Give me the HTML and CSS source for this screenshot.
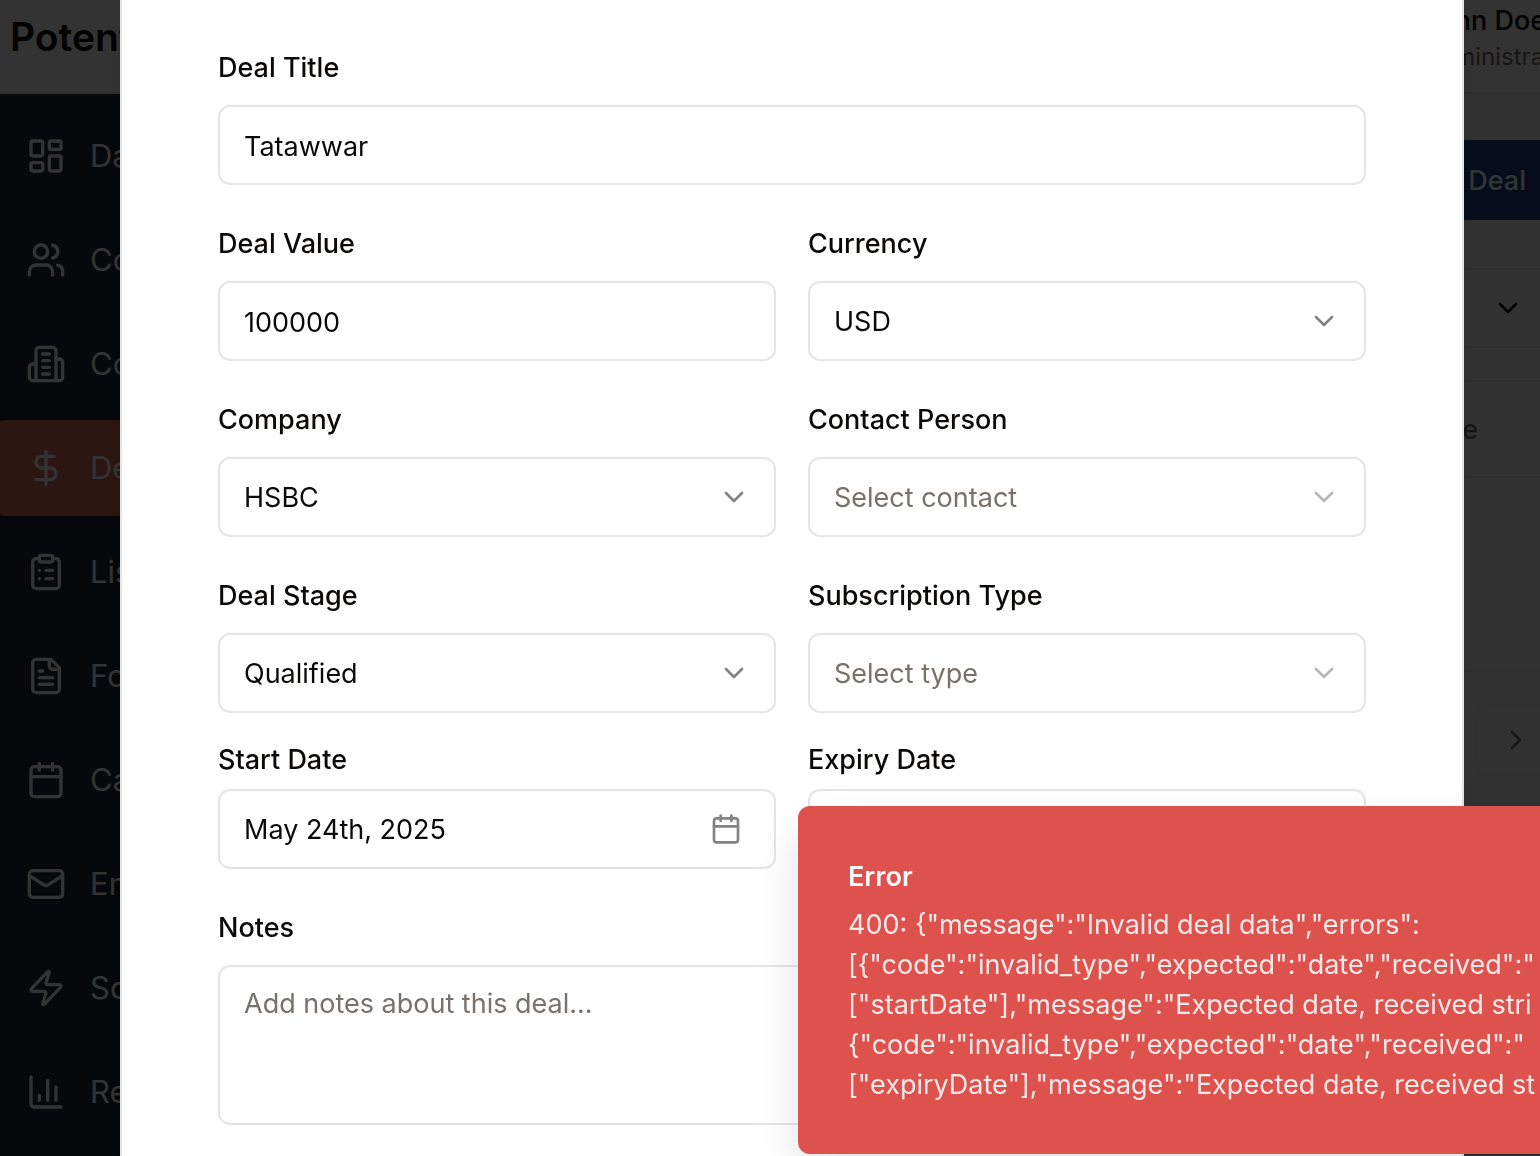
FILE: index.html
```html
<!DOCTYPE html>
<html lang="en">
<head>
<meta charset="utf-8">
<meta name="viewport" content="width=device-width, initial-scale=1">
<title>Deals</title>
<link rel="stylesheet" href="styles.css">
</head>
<body>
<div class="app">
  <header class="topbar">
    <span class="brand">Potential</span>
    <div class="user">
      <span class="user-name">John Doe</span>
      <span class="user-role">Administrator</span>
    </div>
  </header>
  <div class="body">
    <nav class="sidebar">
      <a class="nav-item" href="#"><svg class="icon-lg" viewBox="0 0 24 24"><rect x="3" y="3" width="7" height="9" rx="1"/><rect x="14" y="3" width="7" height="5" rx="1"/><rect x="14" y="12" width="7" height="9" rx="1"/><rect x="3" y="16" width="7" height="5" rx="1"/></svg>Dashboard</a>
      <a class="nav-item" href="#"><svg class="icon-lg" viewBox="0 0 24 24"><path d="M16 21v-2a4 4 0 0 0-4-4H6a4 4 0 0 0-4 4v2"/><circle cx="9" cy="7" r="4"/><path d="M22 21v-2a4 4 0 0 0-3-3.87"/><path d="M16 3.13a4 4 0 0 1 0 7.75"/></svg>Contacts</a>
      <a class="nav-item" href="#"><svg class="icon-lg" viewBox="0 0 24 24"><path d="M6 22V4a2 2 0 0 1 2-2h8a2 2 0 0 1 2 2v18Z"/><path d="M6 12H4a2 2 0 0 0-2 2v6a2 2 0 0 0 2 2h2"/><path d="M18 9h2a2 2 0 0 1 2 2v9a2 2 0 0 1-2 2h-2"/><path d="M10 6h4M10 10h4M10 14h4M10 18h4"/></svg>Companies</a>
      <a class="nav-item nav-item-active" href="#"><svg class="icon-lg" viewBox="0 0 24 24"><path d="M12 2v20"/><path d="M17 5H9.5a3.5 3.5 0 0 0 0 7h5a3.5 3.5 0 0 1 0 7H6"/></svg>Deals</a>
      <a class="nav-item" href="#"><svg class="icon-lg" viewBox="0 0 24 24"><rect x="8" y="2" width="8" height="4" rx="1"/><path d="M16 4h2a2 2 0 0 1 2 2v14a2 2 0 0 1-2 2H6a2 2 0 0 1-2-2V6a2 2 0 0 1 2-2h2"/><path d="M12 11h4M12 16h4M8 11h.01M8 16h.01"/></svg>Lists</a>
      <a class="nav-item" href="#"><svg class="icon-lg" viewBox="0 0 24 24"><path d="M15 2H6a2 2 0 0 0-2 2v16a2 2 0 0 0 2 2h12a2 2 0 0 0 2-2V7Z"/><path d="M14 2v4a2 2 0 0 0 2 2h4"/><path d="M10 9H8M16 13H8M16 17H8"/></svg>Forms</a>
      <a class="nav-item" href="#"><svg class="icon-lg" viewBox="0 0 24 24"><path d="M8 2v4M16 2v4"/><rect x="3" y="4" width="18" height="18" rx="2"/><path d="M3 10h18"/></svg>Calendar</a>
      <a class="nav-item" href="#"><svg class="icon-lg" viewBox="0 0 24 24"><rect x="2" y="4" width="20" height="16" rx="2"/><path d="m22 7-8.97 5.7a1.94 1.94 0 0 1-2.06 0L2 7"/></svg>Email</a>
      <a class="nav-item" href="#"><svg class="icon-lg" viewBox="0 0 24 24"><path d="M4 14a1 1 0 0 1-.78-1.63l9.9-10.2a.5.5 0 0 1 .86.46l-1.92 6.02A1 1 0 0 0 13 10h7a1 1 0 0 1 .78 1.63l-9.9 10.2a.5.5 0 0 1-.86-.46l1.92-6.02A1 1 0 0 0 11 14z"/></svg>Social</a>
      <a class="nav-item" href="#"><svg class="icon-lg" viewBox="0 0 24 24"><path d="M3 3v16a2 2 0 0 0 2 2h16"/><path d="M18 17V9M13 17V5M8 17v-3"/></svg>Reports</a>
    </nav>
    <main class="main">
      <button class="add-button" type="button">Add Deal</button>
      <button class="filter" type="button" aria-label="Filter by stage"><svg class="icon" viewBox="0 0 24 24"><path d="m6 9 6 6 6-6"/></svg></button>
      <table class="deals">
        <thead><tr><th>Expiry Date</th></tr></thead>
        <tbody><tr><td></td></tr></tbody>
      </table>
      <button class="next" type="button" aria-label="Next page"><svg class="icon" viewBox="0 0 24 24"><path d="m9 18 6-6-6-6"/></svg></button>
    </main>
  </div>
</div>

<div class="overlay"></div>

<div class="dialog" role="dialog" aria-label="Edit deal">
  <form class="form">
    <div class="field field-wide">
      <label for="title">Deal Title</label>
      <input class="control" id="title" type="text" value="Tatawwar">
    </div>
    <div class="field">
      <label for="value">Deal Value</label>
      <input class="control" id="value" type="text" inputmode="numeric" value="100000">
    </div>
    <div class="field">
      <label for="currency">Currency</label>
      <div class="select">
        <select class="control" id="currency"><option>USD</option></select>
        <svg class="icon" viewBox="0 0 24 24"><path d="m6 9 6 6 6-6"/></svg>
      </div>
    </div>
    <div class="field">
      <label for="company">Company</label>
      <div class="select">
        <select class="control" id="company"><option>HSBC</option></select>
        <svg class="icon" viewBox="0 0 24 24"><path d="m6 9 6 6 6-6"/></svg>
      </div>
    </div>
    <div class="field">
      <label for="contact">Contact Person</label>
      <div class="select select-empty">
        <select class="control" id="contact"><option>Select contact</option></select>
        <svg class="icon" viewBox="0 0 24 24"><path d="m6 9 6 6 6-6"/></svg>
      </div>
    </div>
    <div class="field">
      <label for="stage">Deal Stage</label>
      <div class="select">
        <select class="control" id="stage"><option>Qualified</option></select>
        <svg class="icon" viewBox="0 0 24 24"><path d="m6 9 6 6 6-6"/></svg>
      </div>
    </div>
    <div class="field">
      <label for="type">Subscription Type</label>
      <div class="select select-empty">
        <select class="control" id="type"><option>Select type</option></select>
        <svg class="icon" viewBox="0 0 24 24"><path d="m6 9 6 6 6-6"/></svg>
      </div>
    </div>
    <div class="field field-date">
      <label for="start">Start Date</label>
      <button class="control date" id="start" type="button"><span>May 24th, 2025</span><svg class="icon" viewBox="0 0 24 24"><path d="M8 2v4M16 2v4"/><rect x="3" y="4" width="18" height="18" rx="2"/><path d="M3 10h18"/></svg></button>
    </div>
    <div class="field field-date">
      <label for="expiry">Expiry Date</label>
      <button class="control date" id="expiry" type="button"></button>
    </div>
    <div class="field field-wide">
      <label for="notes">Notes</label>
      <textarea class="control notes" id="notes" placeholder="Add notes about this deal..."></textarea>
    </div>
  </form>
</div>

<div class="toast" role="alert">
  <strong class="toast-title">Error</strong>
  <div class="toast-text">400: {"message":"Invalid deal data","errors":<br>[{"code":"invalid_type","expected":"date","received":"<br>["startDate"],"message":"Expected date, received stri<br>{"code":"invalid_type","expected":"date","received":"<br>["expiryDate"],"message":"Expected date, received st</div>
</div>
</body>
</html>
```
FILE: styles.css
```css
* { box-sizing: border-box; }

body {
  margin: 0;
  height: 100vh;
  overflow: hidden;
  background: #fafafa;
  color: #0c0a09;
  font: 400 27px/40px Inter, "Liberation Sans", sans-serif;
}

button, input, select, textarea { font: inherit; color: inherit; margin: 0; }

svg {
  fill: none;
  stroke: currentColor;
  stroke-width: 2;
  stroke-linecap: round;
  stroke-linejoin: round;
  flex: none;
}

.icon { width: 32px; height: 32px; }
.icon-lg { width: 40px; height: 40px; }

/* Page behind the dialog */
.app {
  display: flex;
  flex-direction: column;
  min-height: 100vh;
}

.topbar {
  display: flex;
  justify-content: space-between;
  align-items: flex-start;
  height: 94px;
  padding-left: 10px;
  background: #fff;
  border-bottom: 2px solid #e5e5e5;
}

.brand { font-size: 39px; line-height: 74px; font-weight: 600; }

.user {
  display: flex;
  flex-direction: column;
  width: 117px;
  padding-top: 1px;
  white-space: nowrap;
}

.user-name { font-weight: 500; }
.user-role { font-size: 24px; line-height: 32px; color: #78716c; }

.body { display: flex; flex: 1; }

.sidebar {
  display: flex;
  flex-direction: column;
  gap: 8px;
  flex: 0 0 512px;
  padding: 14px 16px 14px 0;
  background: #202838;
}

.nav-item {
  display: flex;
  align-items: center;
  gap: 24px;
  height: 96px;
  margin-left: -6px;
  padding: 0 32px;
  border-radius: 12px;
  color: #fff;
  font-size: 31px;
  text-decoration: none;
}

.nav-item-active { background: #d66e55; }

.main {
  display: flex;
  flex-direction: column;
  flex: 1;
  align-items: flex-end;
  margin-right: -18px;
  padding-top: 46px;
}

.add-button {
  height: 80px;
  padding: 2px 32px 0;
  border: 0;
  border-radius: 12px;
  background: #1e3f8a;
  color: #fff;
  font-weight: 500;
}

.filter {
  display: flex;
  justify-content: flex-end;
  align-items: center;
  width: 420px;
  height: 80px;
  margin-top: 48px;
  padding: 0 32px;
  border: 2px solid #e5e5e5;
  border-radius: 12px;
  background: #fafafa;
}

.deals {
  width: 100%;
  margin-top: 32px;
  border-spacing: 0;
  border: 2px solid #e5e5e5;
  background: #fafafa;
}

.deals th {
  height: 96px;
  padding: 2px 78px 0 0;
  border-bottom: 2px solid #e5e5e5;
  color: #78716c;
  font-weight: 500;
  text-align: right;
}

.deals td { height: 192px; padding: 0; }

.next {
  display: flex;
  justify-content: center;
  align-items: center;
  width: 84px;
  height: 72px;
  margin-top: 32px;
  border: 2px solid #f0f0f0;
  border-radius: 12px;
  background: #fafafa;
  color: #78716c;
}

.overlay {
  position: fixed;
  inset: 0;
  background: rgba(0, 0, 0, .8);
}

/* Dialog */
.dialog {
  position: fixed;
  inset: 0 76px 0 120px;
  padding: 49px 96px 0;
  border: solid #e7e5e4;
  border-width: 0 2px;
  background: #fff;
  box-shadow: 0 20px 30px -6px rgba(0, 0, 0, .1);
}

.form {
  display: grid;
  grid-template-columns: 1fr 1fr;
  gap: 40px 32px;
}

.field {
  display: flex;
  flex-direction: column;
  gap: 18px;
}

.field-wide { grid-column: 1 / -1; }

.field-date { gap: 10px; margin-top: -12px; }

.field label { line-height: 38px; font-weight: 500; }

.control {
  display: block;
  width: 100%;
  height: 80px;
  padding: 2px 24px 0;
  border: 2px solid #e5e5e5;
  border-radius: 12px;
  background: #fff;
  outline: 0;
}

.select { display: grid; align-items: center; }
.select > * { grid-area: 1 / 1; }
.select select { appearance: none; }

.select .icon {
  justify-self: end;
  margin-right: 26px;
  opacity: .5;
  pointer-events: none;
}

.select-empty, .control::placeholder { color: #78716c; opacity: 1; }

.date {
  display: flex;
  justify-content: space-between;
  align-items: center;
  padding: 0 32px 0 24px;
}

.date span { padding-top: 2px; }
.date .icon { opacity: .5; }

.notes { height: 160px; padding: 17px 24px; resize: none; }

/* Error toast, anchored to the bottom right and running off the edge */
.toast {
  position: fixed;
  right: -98px;
  bottom: 2px;
  width: 840px;
  padding: 51px 50px 49px;
  border-radius: 12px;
  background: #dd524c;
  color: #fafafa;
  box-shadow: 0 20px 50px -6px rgba(0, 0, 0, .15);
}

.toast-title { display: block; margin-bottom: 8px; font-weight: 600; }
.toast-text { white-space: nowrap; opacity: .9; }
```
